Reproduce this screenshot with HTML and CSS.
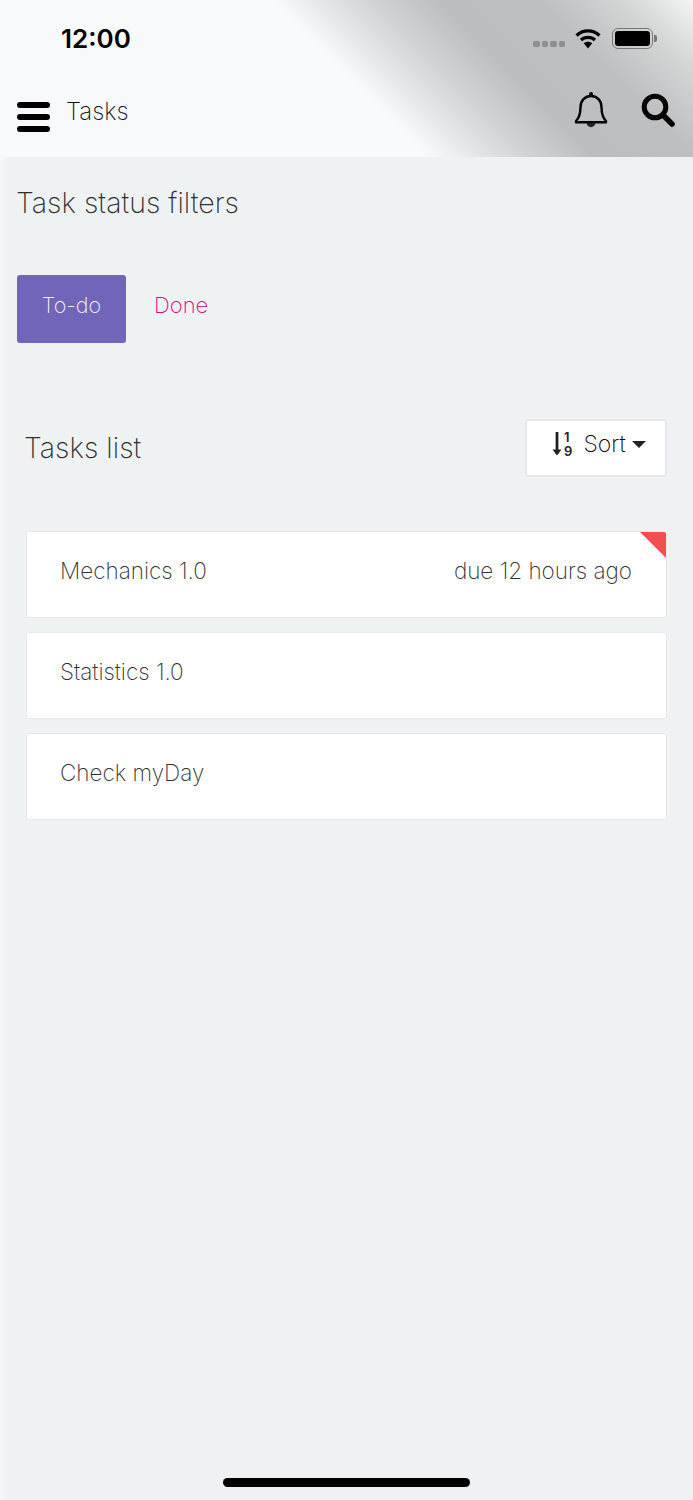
FILE: index.html
```html
<!DOCTYPE html>
<html lang="en">
<head>
    <meta charset="UTF-8">
    <meta name="viewport" content="width=device-width, initial-scale=1.0">
    <title>Tasks</title>
    <link rel="stylesheet" href="styles.css">
</head>
<body>
    <header class="top">
        <div class="status">
            <span class="time">12:00</span>
            <div class="status-icons">
                <span class="dots"><i></i><i></i><i></i><i></i></span>
                <svg class="wifi" width="26" height="21" viewBox="0 0 26 21">
                    <path d="M1.5 7.5C7.8 1.2 18.2 1.2 24.5 7.5" fill="none" stroke="#000" stroke-width="3.2"/>
                    <path d="M6 12C9.8 8.4 16.2 8.4 20 12" fill="none" stroke="#000" stroke-width="3.2"/>
                    <path d="M8.8 15.2C11.2 13.2 14.8 13.2 17.2 15.2L13 20.5Z" fill="#000"/>
                </svg>
                <span class="battery"><span class="battery-level"></span></span>
                <span class="battery-cap"></span>
            </div>
        </div>
        <nav class="nav">
            <div class="nav-left">
                <span class="bars"><i></i><i></i><i></i></span>
                <span class="nav-title">Tasks</span>
            </div>
            <div class="nav-right">
                <svg class="bell" width="34" height="37" viewBox="0 0 34 37">
                    <path d="M2 30C5.5 26.5 6.5 22 6.5 16C6.5 9.500 11 5 17 5C23 5 27.500 9.500 27.500 16C27.500 22 28.500 26.500 32 30L32 31.200L2 31.200Z" fill="none" stroke="#000" stroke-width="2.400" stroke-linejoin="round"/>
                    <circle cx="17" cy="3" r="2" fill="#000"/>
                    <path d="M12.500 32C13 37.500 21 37.500 21.500 32Z" fill="#222"/>
                </svg>
                <svg class="search" width="34" height="34" viewBox="0 0 34 34">
                    <circle cx="14" cy="14" r="10.800" fill="none" stroke="#000" stroke-width="5"/>
                    <path d="M22 22L31 31" stroke="#000" stroke-width="5.500" stroke-linecap="round"/>
                </svg>
            </div>
        </nav>
    </header>

    <main class="content">
        <h2 class="filters-title">Task status filters</h2>
        <div class="filters">
            <button class="filter active">To-do</button>
            <button class="filter">Done</button>
        </div>

        <section class="tasks">
            <div class="tasks-head">
                <h2 class="tasks-title">Tasks list</h2>
                <button class="sort">
                    <svg width="22" height="32" viewBox="0 0 22 32">
                        <path d="M5 4V26" stroke="#222" stroke-width="2.800"/>
                        <path d="M0.500 21.500H9.500L5 27.500Z" fill="#222"/>
                        <text x="12" y="14" class="sort-num">1</text>
                        <text x="12" y="28" class="sort-num">9</text>
                    </svg>
                    <span>Sort</span>
                    <span class="caret"></span>
                </button>
            </div>
            <ul class="task-list">
                <li class="task overdue"><span>Mechanics 1.0</span><span>due 12 hours ago</span></li>
                <li class="task"><span>Statistics 1.0</span></li>
                <li class="task"><span>Check myDay</span></li>
            </ul>
        </section>
    </main>

    <div class="home-bar"></div>
</body>
</html>
```

FILE: styles.css
```css
* {
    box-sizing: border-box;
}
html, body {
    margin: 0;
    padding: 0;
}
body {
    position: relative;
    height: 1500px;
    overflow: hidden;
    background: linear-gradient(90deg, #f6f7f8 0, #eff2f3 8px);
    font-family: "Inter", "Liberation Sans", sans-serif;
    font-weight: 250;
    color: #2e2e2e;
}

/* Top bar */
.top {
    height: 157px;
    background: linear-gradient(45deg, #f8f9fb 50.5%, #d8d9da 60%, #bcbdbe 70%, #bebfc0 82%, #d5d6d6 92%, #f4f4f4 100%);
}
.status {
    display: flex;
    justify-content: space-between;
    align-items: center;
    height: 76px;
    padding: 0 36px 0 61px;
}
.time {
    font-size: 26px;
    font-weight: 600;
    color: #000;
}
.status-icons {
    display: flex;
    align-items: center;
}
.dots {
    display: flex;
    gap: 2px;
    margin: 12px 10px 0 0;
}
.dots i {
    width: 6.500px;
    height: 6.500px;
    border-radius: 2px;
    background: #8e8e8e;
}
.wifi {
    margin-right: 11px;
}
.battery {
    display: flex;
    width: 41px;
    height: 21px;
    padding: 2px;
    border: 1.500px solid #777;
    border-radius: 6px;
}
.battery-level {
    flex: 1;
    border-radius: 3px;
    background: #000;
}
.battery-cap {
    width: 3px;
    height: 7px;
    margin-left: 1px;
    border-radius: 0 2px 2px 0;
    background: #777;
}
.nav {
    display: flex;
    justify-content: space-between;
    align-items: center;
    height: 81px;
    padding: 0 18px 8px 17px;
}
.nav-left, .nav-right {
    display: flex;
    align-items: center;
}
.nav-right {
    gap: 33px;
    margin-bottom: 6px;
}
.bars {
    display: flex;
    flex-direction: column;
    gap: 6.500px;
    width: 33px;
    margin: 9px 16px 0 0;
}
.bars i {
    height: 5.500px;
    border-radius: 3px;
    background: #000;
}
.nav-title {
    margin-bottom: 3px;
    font-size: 24px;
    color: #111;
}

/* Main content */
.content {
    padding: 28px 26px 0 17px;
}
h2 {
    margin: 0;
    font-size: 28.500px;
    font-weight: 250;
    line-height: 36px;
}
.filters-title {
    margin-left: -1px;
}
.tasks-title {
    margin-left: -1px;
}
.filters {
    display: flex;
    margin-top: 54px;
}
.filter {
    height: 68px;
    border: 0;
    border-radius: 3px;
    background: none;
    font: inherit;
    font-size: 22px;
    color: #e6007e;
    padding: 0 0 8px 28px;
}
.filter.active {
    width: 109px;
    padding: 0 0 8px;
    background: #7065b8;
    color: #f4f3fb;
    font-size: 21.500px;
}
.tasks {
    padding-left: 8px;
}
.tasks-head {
    display: flex;
    justify-content: space-between;
    align-items: center;
    margin-top: 76px;
}
.sort {
    display: flex;
    justify-content: center;
    align-items: center;
    gap: 9px;
    width: 142px;
    height: 58px;
    padding: 0 0 8px 6px;
    border: 2px solid #e4e8ea;
    border-radius: 3px;
    background: #fff;
    font: inherit;
    font-size: 23px;
}
.sort-num {
    font-family: "Inter", sans-serif;
    font-size: 13px;
    font-weight: 600;
    fill: #222;
}
.caret {
    width: 0;
    height: 0;
    margin-left: -3px;
    border: 7px solid transparent;
    border-top: 7px solid #222;
    border-bottom: 0;
}

/* Task cards */
.task-list {
    display: flex;
    flex-direction: column;
    gap: 14px;
    margin: 54px 0 0 1px;
    padding: 0;
    list-style: none;
}
.task {
    position: relative;
    display: flex;
    justify-content: space-between;
    height: 87px;
    padding: 25px 34px 0 33px;
    border: 1.500px solid #e6eaec;
    border-radius: 3px;
    background: #fff;
    font-size: 22.500px;
    overflow: hidden;
}
.overdue::after {
    content: "";
    position: absolute;
    top: 0;
    right: 0;
    border-top: 26px solid #f25050;
    border-left: 26px solid transparent;
}

.home-bar {
    position: absolute;
    left: 223px;
    top: 1478px;
    width: 247px;
    height: 9px;
    border-radius: 5px;
    background: #000;
}
```
